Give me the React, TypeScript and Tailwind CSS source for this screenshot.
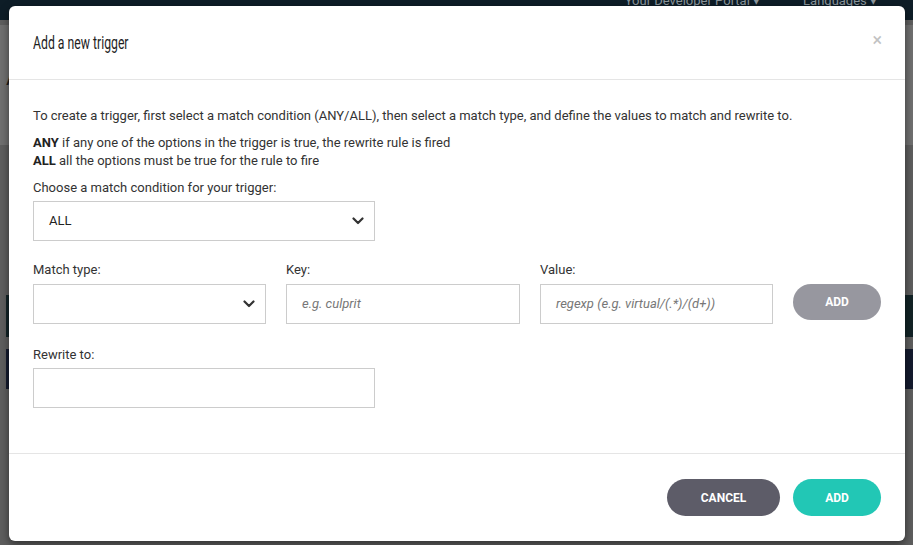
import React from "react";

function Chevron() {
  return (
    <svg width="12" height="8" viewBox="0 0 12 8" className="shrink-0">
      <polyline points="1.5,1.5 6,6 10.5,1.5" fill="none" stroke="#333" strokeWidth="2.2" strokeLinecap="round" strokeLinejoin="round" />
    </svg>
  );
}

export default function App() {
  return (
    <div className="relative w-[913px] h-[545px] overflow-hidden bg-[#5e5e5e] font-['Roboto','Liberation_Sans',sans-serif]">
      {/* background page (dimmed) */}
      <div className="h-[25px] bg-[#0e1d27] flex justify-end items-start gap-[43px] pr-[36px] text-[13px] text-[#8c969c] leading-[12px] -mt-[5px]">
        <span>Your Developer Portal ▾</span>
        <span>Languages ▾</span>
      </div>
      <div className="mt-[5px] h-[120px] bg-[#707070] pt-[40px] pl-[6px] text-[22px] text-[#1a1a1a] leading-[26px]">A</div>
      <div className="h-[150px]" />
      <div className="ml-[6px] h-[42px] bg-[#122326]" />
      <div className="h-[12px]" />
      <div className="ml-[6px] h-[40px] bg-[#141a2e]" />
      <div className="pl-[46px] pt-[138px] text-[13px] text-[#111] leading-[14px]">URL rewrite ▲</div>

      {/* modal */}
      <div className="absolute left-[9px] top-[6px] w-[896px] h-[535px] bg-white rounded-[6px] shadow-[0_3px_9px_rgba(0,0,0,0.5)] flex flex-col text-[#333]">
        <div className="h-[74px] shrink-0 border-b border-[#e5e5e5] flex items-center justify-between px-[24px]">
          <h4 className="text-[18px] leading-[22px] text-[#1e1e1e] inline-block origin-left scale-x-[0.68] mt-[1px]">Add a new trigger</h4>
          <span className="text-[18px] leading-[18px] text-[#c2c2c2] -mt-[6px] -mr-[1px]">×</span>
        </div>
        <div className="flex-1 px-[24px] pt-[27px] text-[13px] leading-[18px]">
          <p className="text-[#333]">To create a trigger, first select a match condition (ANY/ALL), then select a match type, and define the values to match and rewrite to.</p>
          <p className="mt-[9px]"><b className="font-bold text-[#222]">ANY</b> if any one of the options in the trigger is true, the rewrite rule is fired</p>
          <p><b className="font-bold text-[#222]">ALL</b> all the options must be true for the rule to fire</p>
          <p className="mt-[9px]">Choose a match condition for your trigger:</p>
          <div className="mt-[4px] w-[342px] h-[40px] border border-[#cccccc] flex items-center justify-between pl-[15px] pr-[10px]">
            <span className="text-[13px] text-[#222]">ALL</span>
            <Chevron />
          </div>
          <div className="mt-[20px] flex items-end gap-[20px]">
            <div className="w-[233px]">
              <div>Match type:</div>
              <div className="mt-[5px] h-[40px] border border-[#cccccc] flex items-center justify-end pr-[10px]">
                <Chevron />
              </div>
            </div>
            <div className="w-[234px]">
              <div>Key:</div>
              <div className="mt-[5px] h-[40px] border border-[#cccccc] flex items-center pl-[15px] italic text-[#777]">e.g. culprit</div>
            </div>
            <div className="w-[233px]">
              <div>Value:</div>
              <div className="mt-[5px] h-[40px] border border-[#cccccc] flex items-center pl-[15px] italic text-[#777]">regexp (e.g. virtual/(.*)/(d+))</div>
            </div>
            <div className="w-[88px] h-[36px] mb-[4px] rounded-full bg-[#97979f] text-white text-[12px] font-bold flex items-center justify-center">ADD</div>
          </div>
          <div className="mt-[22px]">Rewrite to:</div>
          <div className="mt-[4px] w-[342px] h-[40px] border border-[#cccccc]" />
        </div>
        <div className="h-[88px] shrink-0 border-t border-[#e5e5e5] flex items-center justify-end gap-[13px] px-[24px]">
          <div className="w-[113px] h-[37px] rounded-full bg-[#5d5c68] text-white text-[12px] font-bold flex items-center justify-center">CANCEL</div>
          <div className="w-[88px] h-[37px] rounded-full bg-[#22c7b5] text-white text-[12px] font-bold flex items-center justify-center">ADD</div>
        </div>
      </div>
    </div>
  );
}
